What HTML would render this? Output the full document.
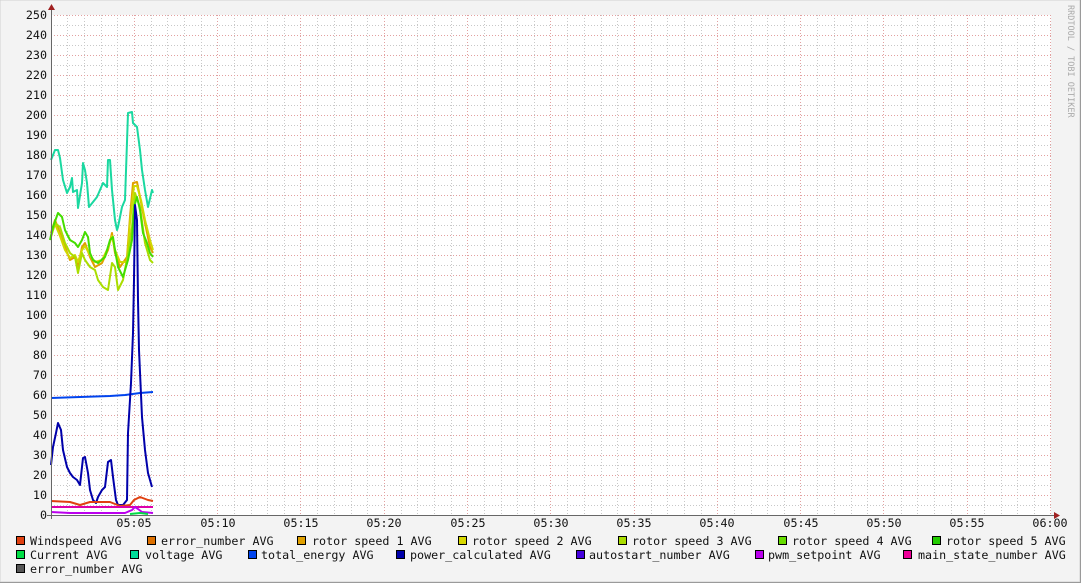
<!DOCTYPE html>
<html><head><meta charset="utf-8"><style>
html,body{margin:0;padding:0;background:#f3f3f3;}
svg{display:block;}
text{font-family:"DejaVu Sans Mono","Liberation Mono",monospace;font-size:11.7px;fill:#111;}
</style></head><body>
<svg width="1081" height="583" viewBox="0 0 1081 583" xmlns="http://www.w3.org/2000/svg">
<rect x="0" y="0" width="1081" height="583" fill="#f3f3f3"/>
<rect x="0" y="0" width="1080" height="582" fill="none" stroke="#d0d0d0"/>
<line x1="1080.5" y1="0" x2="1080.5" y2="583" stroke="#9a9a9a"/>
<line x1="0" y1="582.5" x2="1081" y2="582.5" stroke="#9a9a9a"/>
<rect x="51" y="15" width="1000" height="500" fill="#fff"/>
<g stroke="#c8c8c8" stroke-dasharray="1,2">
<path d="M67.5 15V515M84.5 15V515M101.5 15V515M117.5 15V515M151.5 15V515M167.5 15V515M184.5 15V515M201.5 15V515M234.5 15V515M251.5 15V515M267.5 15V515M284.5 15V515M317.5 15V515M334.5 15V515M351.5 15V515M367.5 15V515M401.5 15V515M417.5 15V515M434.5 15V515M451.5 15V515M484.5 15V515M501.5 15V515M517.5 15V515M534.5 15V515M567.5 15V515M584.5 15V515M601.5 15V515M617.5 15V515M651.5 15V515M667.5 15V515M684.5 15V515M701.5 15V515M734.5 15V515M751.5 15V515M767.5 15V515M784.5 15V515M817.5 15V515M834.5 15V515M851.5 15V515M867.5 15V515M901.5 15V515M917.5 15V515M934.5 15V515M951.5 15V515M984.5 15V515M1001.5 15V515M1017.5 15V515M1034.5 15V515"/>
<path d="M51 25.5H1051M51 45.5H1051M51 65.5H1051M51 85.5H1051M51 105.5H1051M51 125.5H1051M51 145.5H1051M51 165.5H1051M51 185.5H1051M51 205.5H1051M51 225.5H1051M51 245.5H1051M51 265.5H1051M51 285.5H1051M51 305.5H1051M51 325.5H1051M51 345.5H1051M51 365.5H1051M51 385.5H1051M51 405.5H1051M51 425.5H1051M51 445.5H1051M51 465.5H1051M51 485.5H1051M51 505.5H1051"/>
</g>
<g stroke="#e2a0a0" stroke-dasharray="1,2">
<path d="M134.5 15V515M217.5 15V515M300.5 15V515M384.5 15V515M467.5 15V515M550.5 15V515M634.5 15V515M717.5 15V515M800.5 15V515M883.5 15V515M967.5 15V515M1050.5 15V515"/>
<path d="M51 15.5H1051M51 35.5H1051M51 55.5H1051M51 75.5H1051M51 95.5H1051M51 115.5H1051M51 135.5H1051M51 155.5H1051M51 175.5H1051M51 195.5H1051M51 215.5H1051M51 235.5H1051M51 255.5H1051M51 275.5H1051M51 295.5H1051M51 315.5H1051M51 335.5H1051M51 355.5H1051M51 375.5H1051M51 395.5H1051M51 415.5H1051M51 435.5H1051M51 455.5H1051M51 475.5H1051M51 495.5H1051"/>
</g>

<g fill="none" stroke-width="2" stroke-linejoin="round">
<polyline stroke="#1ad8a0" points="51,160 55,150 58,150 60,158 63,180 67,193 70,187 72,178 73,192 77,190 78,208 82,183 83,163 85,170 87,183 89,207 93,202 97,197 100,190 103,183 107,187 108,160 110,160 112,190 115,220 117,230 118,227 122,207 125,200 128,113 132,112 133,123 137,127 140,150 142,170 145,190 148,207 152,190 153,193"/>
<polyline stroke="#e0a000" points="51,233 55,220 60,233 65,247 70,260 75,257 78,267 82,247 85,243 90,257 95,267 102,263 108,250 112,233 115,253 120,267 127,257 130,217 133,183 137,182 140,197 145,223 150,247 153,253"/>
<polyline stroke="#d0d800" points="51,236 55,224 60,236 65,250 70,258 75,255 78,262 82,250 85,246 90,255 95,262 102,260 108,248 112,236 115,250 120,262 127,262 130,222 134,186 137,186 141,200 145,220 150,240 153,250"/>
<polyline stroke="#aadd00" points="51,237 55,223 60,227 65,243 70,253 75,257 78,273 82,253 85,260 90,267 95,270 98,280 103,287 108,290 112,263 115,267 118,290 123,280 128,253 132,227 135,193 140,207 145,243 150,260 153,263"/>
<polyline stroke="#44dd00" points="50,240 53,227 58,213 62,217 65,230 70,240 75,243 78,247 82,240 85,232 88,237 90,253 93,260 98,263 105,257 110,240 113,237 115,250 118,267 123,277 128,260 132,240 134,207 137,197 140,210 143,233 147,243 150,253 153,257"/>
<polyline stroke="#0044ee" points="51,398 80,397 110,396 125,395 140,393 153,392"/>
<polyline stroke="#0000aa" points="51,465 53,447 56,433 58,423 61,430 63,450 67,467 70,473 73,477 77,480 80,485 83,458 85,457 88,473 90,490 93,500 96,503 98,497 102,490 105,487 108,462 111,460 113,477 116,500 118,505 123,505 127,500 128,433 131,383 133,333 134,280 135,205 137,220 138,300 139,350 142,417 145,450 148,473 152,487"/>
<polyline stroke="#e04010" points="51,501 70,502 80,505 90,502 110,502 120,506 130,505 134,500 140,497 148,500 153,501"/>
<polyline stroke="#dd00aa" points="51,507 153,507"/>
<polyline stroke="#bb00ee" points="51,512 70,513 110,513 125,513 132,510 135,507 138,509 142,512 153,513"/>
<polyline stroke="#00dd44" points="130,514 140,513 148,514"/>
</g>

<g stroke="#666">
<line x1="51.5" y1="10" x2="51.5" y2="519"/>
<line x1="47" y1="515.5" x2="1055" y2="515.5"/>
</g>
<polygon points="48,10 55,10 51.5,4" fill="#a02020"/>
<polygon points="1054,512 1054,519 1060,515.5" fill="#a02020"/>

<g text-anchor="end">
<text x="47" y="19">250</text><text x="47" y="39">240</text><text x="47" y="59">230</text><text x="47" y="79">220</text><text x="47" y="99">210</text><text x="47" y="119">200</text><text x="47" y="139">190</text><text x="47" y="159">180</text><text x="47" y="179">170</text><text x="47" y="199">160</text><text x="47" y="219">150</text><text x="47" y="239">140</text><text x="47" y="259">130</text><text x="47" y="279">120</text><text x="47" y="299">110</text><text x="47" y="319">100</text><text x="47" y="339">90</text><text x="47" y="359">80</text><text x="47" y="379">70</text><text x="47" y="399">60</text><text x="47" y="419">50</text><text x="47" y="439">40</text><text x="47" y="459">30</text><text x="47" y="479">20</text><text x="47" y="499">10</text><text x="47" y="519">0</text>
</g>
<g text-anchor="middle">
<text x="134" y="527">05:05</text><text x="218" y="527">05:10</text><text x="301" y="527">05:15</text><text x="384" y="527">05:20</text><text x="468" y="527">05:25</text><text x="551" y="527">05:30</text><text x="634" y="527">05:35</text><text x="717" y="527">05:40</text><text x="801" y="527">05:45</text><text x="884" y="527">05:50</text><text x="967" y="527">05:55</text><text x="1050" y="527">06:00</text>
</g>

<text transform="translate(1068,5) rotate(90)" style="font-size:8.5px;fill:#aaa">RRDTOOL / TOBI OETIKER</text>

<g stroke="#000" stroke-width="1">
<rect x="16.5" y="536.5" width="8" height="8" fill="#e04010"/>
<rect x="147.5" y="536.5" width="8" height="8" fill="#dd7000"/>
<rect x="297.5" y="536.5" width="8" height="8" fill="#e0a000"/>
<rect x="458.5" y="536.5" width="8" height="8" fill="#d8d800"/>
<rect x="618.5" y="536.5" width="8" height="8" fill="#aadd00"/>
<rect x="778.5" y="536.5" width="8" height="8" fill="#66dd00"/>
<rect x="932.5" y="536.5" width="8" height="8" fill="#22cc00"/>
<rect x="16.5" y="550.5" width="8" height="8" fill="#00dd44"/>
<rect x="130.5" y="550.5" width="8" height="8" fill="#00dd99"/>
<rect x="248.5" y="550.5" width="8" height="8" fill="#0044ee"/>
<rect x="396.5" y="550.5" width="8" height="8" fill="#0000aa"/>
<rect x="576.5" y="550.5" width="8" height="8" fill="#4400dd"/>
<rect x="755.5" y="550.5" width="8" height="8" fill="#bb00ee"/>
<rect x="903.5" y="550.5" width="8" height="8" fill="#ee0099"/>
<rect x="16.5" y="564.5" width="8" height="8" fill="#555"/>
</g>
<g>
<text x="30" y="545">Windspeed AVG</text>
<text x="161" y="545">error_number AVG</text>
<text x="312" y="545">rotor speed 1 AVG</text>
<text x="472" y="545">rotor speed 2 AVG</text>
<text x="632" y="545">rotor speed 3 AVG</text>
<text x="792" y="545">rotor speed 4 AVG</text>
<text x="946" y="545">rotor speed 5 AVG</text>
<text x="30" y="559">Current AVG</text>
<text x="145" y="559">voltage AVG</text>
<text x="261" y="559">total_energy AVG</text>
<text x="410" y="559">power_calculated AVG</text>
<text x="589" y="559">autostart_number AVG</text>
<text x="768" y="559">pwm_setpoint AVG</text>
<text x="918" y="559">main_state_number AVG</text>
<text x="30" y="573">error_number AVG</text>
</g>
</svg>
</body></html>
